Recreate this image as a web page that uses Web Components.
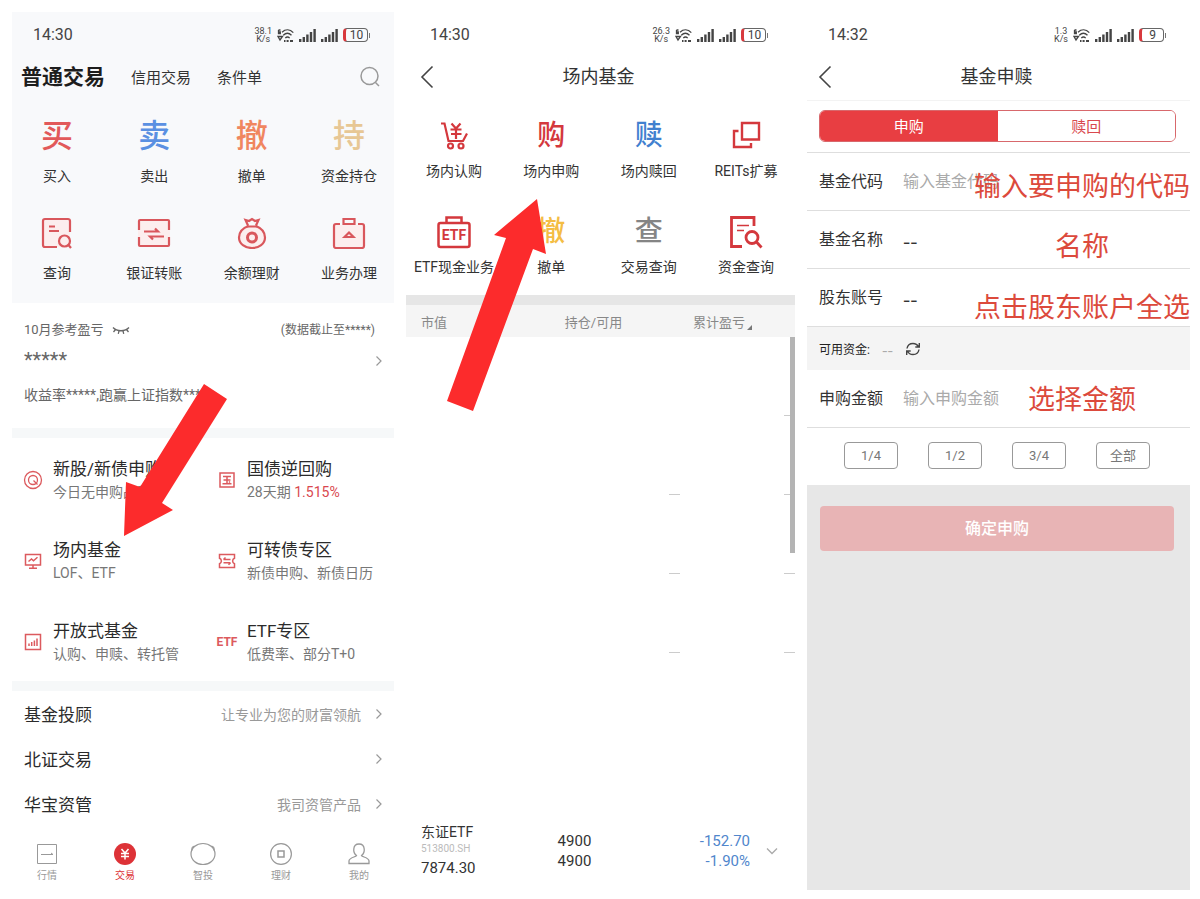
<!DOCTYPE html>
<html lang="zh-CN">
<head>
<meta charset="utf-8">
<meta name="viewport" content="width=device-width, initial-scale=1">
<title>场内基金申购</title>
<style>
  body { margin: 0; background: #fff; color: #333; font-family: Roboto, "Noto Sans CJK SC", sans-serif; }
</style>
</head>
<body>
<app-board>
  <trade-home></trade-home>
  <fund-market></fund-market>
  <fund-order></fund-order>
</app-board>

<script>
const BASE = `
  * { box-sizing: border-box; }
  a { color: inherit; text-decoration: none; }
  button, input { font: inherit; color: inherit; margin: 0; }
  svg { display: block; fill: none; stroke: currentColor; }
`;

class Base extends HTMLElement {
  connectedCallback() {
    if (this.shadowRoot) return;
    const t = document.createElement('template');
    t.innerHTML = `<style>${BASE}${this.css()}</style>${this.html()}`;
    this.attachShadow({ mode: 'open' }).append(t.content.cloneNode(true));
  }
  at(name) { return this.getAttribute(name) || ''; }
  css() { return ''; }
  html() { return '<slot></slot>'; }
}

const CHEVRON = '<svg width="8" height="12" viewBox="0 0 8 12" style="stroke:#999" stroke-width="1.2" aria-hidden="true"><path d="M1.5 1.5 6 6 1.5 10.5"/></svg>';

/* Three screens side by side */
customElements.define('app-board', class extends Base {
  css() { return `
    :host { display: grid; grid-template-columns: 382fr 389fr 383fr; gap: 12px;
      min-height: 100vh; box-sizing: border-box; padding: 12px 10px 10px 12px; }
    ::slotted(*) { min-width: 0; }`; }
});

customElements.define('status-bar', class extends Base {
  css() { return `
    :host { display: flex; align-items: center; height: 46px; padding: 0 24px 0 21px; gap: 5px; color: #444; }
    time { flex: 1; font-size: 16px; line-height: 20px; }
    .speed { font-size: 9px; line-height: 8px; text-align: center; }
    .bars { stroke: none; fill: #444; }
    .battery { display: flex; align-items: center; gap: 1px; }
    .battery span { width: 25px; height: 14px; line-height: 12px; border: 1px solid #666; border-left: 3px solid #d8393d;
      border-radius: 4px; font-size: 12px; text-align: center; }
    .battery i { width: 1px; height: 5px; background: #777; }`; }
  html() {
    const bars = `<svg class="bars" width="17" height="13" viewBox="0 0 17 13" aria-hidden="true"><path d="M0 10h2.400v3H0zM3.600 8H6v5H3.600zM7.200 5.500h2.400V13H7.200zM10.800 3h2.400v10h-2.400zM14.400 0h2.400v13h-2.400z"/></svg>`;
    return `
    <time>${this.at('time')}</time>
    <span class="speed">${this.at('speed')}<br>K/s</span>
    <svg width="17" height="13" viewBox="0 0 17 13" stroke-width="1.300" aria-hidden="true">
      <path d="M5 3.200c3.500-3.200 8-3.100 11.300.4M6.300 6.200c2.500-2.400 5.800-2.300 8.200.1M8.300 9c1.400-1.300 3-1.300 4.400.1M1.500 1v3.500h1.800V3H1.500M1.500 1h2M1 7.500h4.500L3 11z"/>
      <path stroke-width="1.800" d="M7 12h1.500M9.600 12h2M13 12h3"/></svg>
    ${bars}${bars}
    <span class="battery"><span>${this.at('battery')}</span><i></i></span>`; }
});

/* Icon over a caption */
customElements.define('icon-tile', class extends Base {
  css() { return `
    :host { display: block; flex: none; width: var(--tile-width, 64px); }
    a { display: flex; flex-direction: column; align-items: center; gap: var(--tile-gap, 14px); }
    .icon { display: flex; align-items: center; justify-content: center; width: 34px; height: 32px;
      font-size: var(--glyph-size, 32px); line-height: 32px; font-weight: 500; color: var(--tile-color, #d9575c); }
    .label { font-size: 14px; line-height: 20px; white-space: nowrap; color: #333; }`; }
  html() { return `<a href="#"><span class="icon"><slot></slot></span><span class="label">${this.at('label')}</span></a>`; }
});

customElements.define('tile-row', class extends Base {
  css() { return `:host { display: flex; justify-content: space-between; }`; }
});

/* Icon with a title and a note beside it */
customElements.define('menu-card', class extends Base {
  css() { return `
    :host { display: block; min-width: 0; }
    a { display: flex; align-items: center; gap: 10px; }
    .icon { flex: none; display: flex; justify-content: center; width: 20px; color: #dc5a5e; font-size: 12px; font-weight: 700; }
    .text { min-width: 0; white-space: nowrap; }
    .title { display: block; font-size: 17px; line-height: 24px; color: #2b2b2b; }
    .note { display: block; font-size: 14px; line-height: 22px; color: #777; }`; }
  html() { return `<a href="#"><span class="icon"><slot></slot></span>
    <span class="text"><span class="title">${this.at('heading')}</span><span class="note"><slot name="note"></slot></span></span></a>`; }
});

customElements.define('link-row', class extends Base {
  css() { return `
    :host { display: block; }
    a { display: flex; align-items: center; height: 45px; padding: 0 11px 0 12px; gap: 14px; }
    .title { flex: 1; font-size: 17px; color: #2b2b2b; }
    .note { font-size: 14px; color: #999; }`; }
  html() { return `<a href="#"><span class="title">${this.at('heading')}</span><span class="note">${this.at('note')}</span>${CHEVRON}</a>`; }
});

customElements.define('tab-item', class extends Base {
  css() { return `
    :host { display: block; width: 44px; color: #999; }
    :host([active]) { color: #dd3237; }
    a { display: flex; flex-direction: column; align-items: center; gap: 2px; font-size: 10px; line-height: 16px; }`; }
  html() { return `<a href="#"><slot></slot><span>${this.at('label')}</span></a>`; }
});

customElements.define('point-arrow', class extends Base {
  css() { return `
    :host { display: block; position: absolute; pointer-events: none; }
    svg { stroke: none; fill: #fc2b2c; }`; }
  html() {
    const w = this.at('w'), h = this.at('h');
    return `<svg width="${w}" height="${h}" viewBox="0 0 ${w} ${h}" aria-hidden="true"><polygon points="${this.at('points')}"/></svg>`; }
});

/* Screen 1: trading home */
customElements.define('trade-home', class extends Base {
  css() { return `
    :host { display: block; position: relative; }
    .top { background: #f8f9fb; padding-bottom: 20px; }
    nav.tabs { display: flex; align-items: center; height: 38px; padding: 0 13px 0 9px; gap: 26px; }
    .tabs a { font-size: 15px; line-height: 24px; padding-top: 2px; }
    .tabs a[aria-current] { font-size: 21px; font-weight: 700; color: #1d1d1d; padding-top: 0; }
    .tabs button { margin-left: auto; padding: 0; border: 0; background: none; color: #999; }
    tile-row { padding: 0 13px; margin-top: 24px; }
    tile-row + tile-row { margin-top: 31px; }
    .profit { display: grid; grid-template-columns: 1fr auto; align-items: center; padding: 17px 11px 23px 12px; color: #666; font-size: 13px; line-height: 20px; }
    .month { display: flex; align-items: center; gap: 8px; }
    .asof { font-size: 12px; padding-right: 8px; }
    .sum { font-size: 20px; line-height: 24px; padding-top: 8px; height: 32px; }
    .more { justify-self: end; padding-top: 10px; }
    .rate { padding-top: 13px; grid-column: 1 / -1; font-size: 14px; }
    .band { height: 10px; background: #f6f8f9; }
    .cards { display: grid; grid-template-columns: 194fr 177fr; row-gap: 35px; padding: 19px 0 16px 11px; }
    .red { color: #d9484e; }
    .bar { display: flex; justify-content: space-between; padding: 16px 13px 3px; }
    .mark { left: 112px; top: 372px; }`; }
  html() { return `
  <section class="top">
    <status-bar time="14:30" speed="38.1" battery="10"></status-bar>
    <nav class="tabs"><a href="#" aria-current="page">普通交易</a><a href="#">信用交易</a><a href="#">条件单</a>
      <button aria-label="搜索"><svg width="22" height="22" viewBox="0 0 22 22" stroke-width="1.500"><circle cx="10.500" cy="10" r="8.500"/><path d="m16.500 16.500 3.500 3.500"/></svg></button></nav>
    <tile-row>
      <icon-tile label="买入" style="--tile-color:#e2595a">买</icon-tile>
      <icon-tile label="卖出" style="--tile-color:#5a90e2">卖</icon-tile>
      <icon-tile label="撤单" style="--tile-color:#f0865f">撤</icon-tile>
      <icon-tile label="资金持仓" style="--tile-color:#e7c795">持</icon-tile>
    </tile-row>
    <tile-row>
      <icon-tile label="查询"><svg width="32" height="32" viewBox="0 0 32 32" stroke-width="2.200"><path fill="#fceeee" stroke="none" d="M3 2h26v28H3z"/><path d="M29 15V4a2 2 0 0 0-2-2H4a2 2 0 0 0-2 2v24a2 2 0 0 0 2 2h12M8 9.500h6M8 14h10"/><circle cx="23.500" cy="24" r="5.500"/><path d="m27.500 28 2.500 3"/></svg></icon-tile>
      <icon-tile label="银证转账"><svg width="34" height="32" viewBox="0 0 34 32" stroke-width="2.200"><path fill="#fceeee" stroke="none" d="M1 3h32v26H1z"/><path d="M2 13V4a1 1 0 0 1 1-1h28a1 1 0 0 1 1 1v9M2 20v8a1 1 0 0 0 1 1h28a1 1 0 0 0 1-1v-8M7 14.500h14l-3-3M27 19.500H13l3 3"/></svg></icon-tile>
      <icon-tile label="余额理财"><svg width="32" height="32" viewBox="0 0 32 32" stroke-width="2.200"><path fill="#fceeee" d="M12.500 9C7 11 3 15 3 20.500 3 27 9 31 16 31s13-4 13-10.500C29 15 25 11 20 9"/><path d="M11 9.500h10M12 8.500 9.500 3 13 4l3-2 3 2 3.500-1-2.500 5.500"/><circle cx="16" cy="20.500" r="4.500" stroke-width="3"/></svg></icon-tile>
      <icon-tile label="业务办理"><svg width="34" height="32" viewBox="0 0 34 32" stroke-width="2.200"><path fill="#fceeee" stroke="none" d="M3 8h28v22H3z"/><path d="M8 7H4a2 2 0 0 0-2 2v20a2 2 0 0 0 2 2h26a2 2 0 0 0 2-2V9a2 2 0 0 0-2-2h-4M11.500 2h11v5h-11z"/><path d="m12.500 20 4.500-4.500 4.500 4.500z"/></svg></icon-tile>
    </tile-row>
  </section>
  <section class="profit">
    <span class="month">10月参考盈亏 <svg width="18" height="9" viewBox="0 0 18 9" stroke-width="1.300" aria-hidden="true"><path d="M1 1.500c4 4.300 12 4.300 16 0M3.500 3.500 1.500 6M7 4.800 6.300 7.800M11 4.800l.7 3M14.500 3.500l2 2.500"/></svg></span>
    <span class="asof">(数据截止至*****)</span>
    <span class="sum">*****</span><a class="more" href="#" aria-label="查看盈亏">${CHEVRON}</a>
    <span class="rate">收益率*****,跑赢上证指数*****</span>
  </section>
  <div class="band"></div>
  <section class="cards">
    <menu-card heading="新股/新债申购"><svg width="20" height="20" viewBox="0 0 20 20" stroke-width="1.300"><circle cx="10" cy="10" r="8.500"/><circle cx="10" cy="10" r="4.500"/><path d="m10.500 10.500 4 4"/></svg><span slot="note">今日无申购品种</span></menu-card>
    <menu-card heading="国债逆回购"><svg width="18" height="18" viewBox="0 0 18 18" stroke-width="1.500"><path d="M2 2h14v14H2zM5 5.500h8M5.500 9h7M4.500 12.800h9M9 5.500v7.300M11 10.500l1 1"/></svg><span slot="note">28天期 <span class="red">1.515%</span></span></menu-card>
    <menu-card heading="场内基金"><svg width="18" height="18" viewBox="0 0 18 18" stroke-width="1.500"><path d="M1.500 2.500h15v10.500h-15zM9 13v3M5 16.200h8M4.500 9.500 7.500 7l2 1.800 4-3.500"/></svg><span slot="note">LOF、ETF</span></menu-card>
    <menu-card heading="可转债专区"><svg width="18" height="18" viewBox="0 0 18 18" stroke-width="1.500"><path d="M1.500 2.500h15v3.700c-2.500 1-2.500 4.600 0 5.600v3.700h-15v-3.700c2.500-1 2.500-4.600 0-5.600zM5.500 7.500h7M5.500 10.800h7M7.500 5.500l-2 2M10.500 12.800l2-2"/></svg><span slot="note">新债申购、新债日历</span></menu-card>
    <menu-card heading="开放式基金"><svg width="18" height="18" viewBox="0 0 18 18" stroke-width="1.500"><path d="M1.500 1.500h15v15h-15zM5 13v-2.500M7.700 13V9M10.400 13V7.500M13 13V5.500"/></svg><span slot="note">认购、申赎、转托管</span></menu-card>
    <menu-card heading="ETF专区">ETF<span slot="note">低费率、部分T+0</span></menu-card>
  </section>
  <div class="band"></div>
  <link-row heading="基金投顾" note="让专业为您的财富领航"></link-row>
  <link-row heading="北证交易"></link-row>
  <link-row heading="华宝资管" note="我司资管产品"></link-row>
  <nav class="bar">
    <tab-item label="行情"><svg width="24" height="24" viewBox="0 0 24 24"><path d="M2.500 2.500h19v19h-19zM6 12.500h12l-2-1.500"/></svg></tab-item>
    <tab-item label="交易" active><svg width="24" height="24" viewBox="0 0 24 24"><circle cx="12" cy="12" r="11" fill="currentColor" stroke="none"/><path stroke="#fff" stroke-width="1.500" d="m8.500 7 3.500 4 3.500-4M8 11.500h8M8 14.500h8M12 11v6.500"/></svg></tab-item>
    <tab-item label="智投"><svg width="26" height="24" viewBox="0 0 26 24" stroke-width="1.200"><ellipse cx="13" cy="12" rx="12" ry="10.500"/><path d="M2 8.500c-.5-2.500.5-4 2.500-4.500M24 8.500c.5-2.500-.5-4-2.500-4.500"/></svg></tab-item>
    <tab-item label="理财"><svg width="24" height="24" viewBox="0 0 24 24" stroke-width="1.200"><circle cx="12" cy="12" r="10.400"/><path d="M9 9h6v6H9z" stroke-width="1.500"/></svg></tab-item>
    <tab-item label="我的"><svg width="24" height="24" viewBox="0 0 24 24" stroke-width="1.300"><path d="M9.500 13.500C7.500 12 6.500 9.500 6.800 7 7 4 9 2 12 2s5 2 5.200 5c.3 2.500-.7 5-2.700 6.500.5 1.500 7.500 2 7.500 5.500v2.500H2V19c0-3.500 7-4 7.500-5.500z"/></svg></tab-item>
  </nav>
  <point-arrow class="mark" w="104" h="153" points="80,0 103,15 38,119 49,126 0,152 2,98 16,103"></point-arrow>`; }
});

/* Title with a back button */
customElements.define('title-bar', class extends Base {
  css() { return `
    :host { display: grid; grid-template-columns: 44px 1fr 48px; align-items: center; height: 38px; }
    button { justify-self: start; padding: 0 0 0 14px; border: 0; background: none; color: #444; }
    :host([inset]) button { padding-left: 11px; }
    h1 { margin: 0; text-align: center; font-size: 18px; line-height: 24px; font-weight: 400; }`; }
  html() { return `<button aria-label="返回"><svg width="14" height="24" viewBox="0 0 14 24" stroke-width="1.600"><path d="M12.500 1.500 2 12l10.500 10.500"/></svg></button><h1><slot></slot></h1>`; }
});

/* Screen 2: listed funds */
customElements.define('fund-market', class extends Base {
  css() { return `
    :host { display: block; position: relative; }
    status-bar { padding: 0 27px 0 24px; }
    .tiles { padding: 24px 9px 18px 8px; --tile-width: 80px; --tile-gap: 9px; --glyph-size: 28px; --tile-color: #d4383d; }
    tile-row + tile-row { margin-top: 35px; }
    .band { height: 10px; background: #e6e6e6; }
    table { width: 100%; border-collapse: collapse; table-layout: fixed; font-size: 15px; line-height: 20px; }
    th { height: 32px; padding: 3px 0 0; background: #f5f5f5; color: #888; font-size: 13px; font-weight: 400; }
    th, td { text-align: right; }
    th:first-child, td:first-child { text-align: left; padding-left: 15px; width: 30%; }
    td:nth-child(2) { padding-right: 45px; }
    th:nth-child(2) { text-align: center; padding-left: 28px; }
    th:nth-child(3) { padding-right: 5px; }
    th:last-child, td:last-child { width: 45px; }
    td { height: 79px; padding: 0; }
    .rest td { vertical-align: bottom; }
    .rest i { display: block; width: 11px; height: 1px; margin-left: auto; background: #ccc; }
    .rest td:nth-child(3) i { margin-left: 33px; }
    .name { display: block; font-size: 14px; line-height: 18px; }
    .code { display: block; font-size: 10px; line-height: 16px; color: #bbb; }
    .value { display: block; line-height: 22px; }
    .loss { color: #5086cc; }
    .fold { padding: 0 0 0 16px; border: 0; background: none; color: #aaa; display: block; }
    .sort { margin-top: 10px; margin-left: -3px; fill: #777; stroke: none; }
    .scroll { position: absolute; right: 0; top: 325px; width: 5px; height: 216px; background: #b4b4b4; }
    .mark { left: 41px; top: 187px; }`; }
  html() { return `
  <status-bar time="14:30" speed="26.3" battery="10"></status-bar>
  <title-bar>场内基金</title-bar>
  <div class="tiles">
    <tile-row>
      <icon-tile label="场内认购"><svg width="30" height="30" viewBox="0 0 30 30" stroke-width="2.200"><path d="M2 2.500h3.500l4 17.500h14.500l4-7.500"/><circle cx="11.500" cy="25" r="2.500"/><circle cx="22" cy="25" r="2.500"/><path d="m12.500 2.500 4.500 5 4.500-5M11.500 8.500h11M12 13h10.500M17 8v10"/></svg></icon-tile>
      <icon-tile label="场内申购">购</icon-tile>
      <icon-tile label="场内赎回" style="--tile-color:#4180cf">赎</icon-tile>
      <icon-tile label="REITs扩募"><svg width="30" height="30" viewBox="0 0 30 30" stroke-width="2.400"><path d="M11 2h17v16.500H11zM7.500 10H3v16h17v-4"/></svg></icon-tile>
    </tile-row>
    <tile-row>
      <icon-tile label="ETF现金业务"><svg width="34" height="34" viewBox="0 0 34 34" stroke-width="2.500"><path d="M9.500 8V2.500h15V8"/><rect x="1.500" y="8" width="31" height="24" rx="2"/><text x="17" y="25" fill="currentColor" stroke="none" text-anchor="middle" font-size="14" font-weight="700">ETF</text></svg></icon-tile>
      <icon-tile label="撤单" style="--tile-color:#f4bd44">撤</icon-tile>
      <icon-tile label="交易查询" style="--tile-color:#858585">查</icon-tile>
      <icon-tile label="资金查询"><svg width="34" height="34" viewBox="0 0 34 34" stroke-width="2.800"><path d="M25 11V2.500H2.500v29H13"/><path stroke-width="1.500" d="M8 10.500h12M8 15.500h7"/><circle cx="23" cy="22.500" r="6"/><path d="m27.500 27 5 5.500"/></svg></icon-tile>
    </tile-row>
  </div>
  <div class="band"></div>
  <table>
    <thead><tr><th scope="col">市值</th><th scope="col">持仓/可用</th><th scope="col">累计盈亏</th><th><svg class="sort" width="5" height="5" viewBox="0 0 5 5" aria-hidden="true"><path d="M5 0v5H0z"/></svg></th></tr></thead>
    <tbody>
      <tr class="rest"><td></td><td></td><td></td><td><i></i></td></tr>
      <tr class="rest"><td></td><td></td><td><i></i></td><td><i></i></td></tr>
      <tr class="rest"><td></td><td></td><td><i></i></td><td><i></i></td></tr>
      <tr class="rest"><td></td><td></td><td><i></i></td><td><i></i></td></tr>
      <tr class="rest"><td></td><td></td><td></td><td></td></tr>
      <tr class="rest"><td></td><td></td><td></td><td></td></tr>
      <tr>
        <td><span class="name">东证ETF</span><span class="code">513800.SH</span><span class="value">7874.30</span></td>
        <td>4900<br>4900</td>
        <td class="loss">-152.70<br>-1.90%</td>
        <td><button class="fold" aria-label="展开"><svg width="12" height="8" viewBox="0 0 12 8" stroke-width="1.300"><path d="m1 1.500 5 5 5-5"/></svg></button></td>
      </tr>
    </tbody>
  </table>
  <div class="scroll"></div>
  <point-arrow class="mark" w="99" h="212" points="90,0 99,55 86,50 26,212 0,202 59,39 47,36"></point-arrow>`; }
});

/* One labelled line of the order form; without a placeholder it shows a fixed value */
customElements.define('form-line', class extends Base {
  css() { return `
    :host { display: flex; align-items: center; position: relative; height: 58px; padding-left: 12px; border-bottom: 1px solid #dedede; box-sizing: border-box; font-size: 16px; }
    label { flex: none; width: 84px; line-height: 24px; }
    input { flex: 1; min-width: 0; padding: 0; border: 0; outline: 0; background: none; }
    output { flex: 1; font-family: "Noto Sans CJK SC", sans-serif; font-size: 21px; line-height: 24px; }
    input::placeholder { color: #aaa; opacity: 1; }
    .tip { position: absolute; right: var(--tip-right, 0); top: var(--tip-top, 14px); font-size: 27px; line-height: 40px; color: #dc4a3c; pointer-events: none; white-space: nowrap; }`; }
  html() {
    const ph = this.at('placeholder');
    return `<label for="f">${this.at('label')}</label>${ph ? `<input id="f" placeholder="${ph}">` : '<output id="f">--</output>'}<span class="tip">${this.at('tip')}</span>`; }
});

/* Screen 3: fund order form */
customElements.define('fund-order', class extends Base {
  css() { return `
    :host { display: flex; flex-direction: column; }
    .switch { display: grid; grid-template-columns: 1fr 1fr; margin: 0 14px 10px 12px; border: 1px solid #d8686c; border-radius: 6px; overflow: hidden; }
    .switch button { height: 30px; padding: 0 0 2px; border: 0; background: #fff; color: #d9484e; font-size: 15px; }
    .switch button[aria-pressed=true] { background: #e83e42; color: #fff; }
    .head { border-bottom: 1px solid #dedede; }
    title-bar { border-bottom: 1px solid #f3f3f3; height: 43px; padding-bottom: 4px; margin-bottom: 9px; }
    .cash { display: flex; align-items: center; height: 43px; padding-left: 12px; background: #f4f4f4; font-size: 12px; color: #222; }
    .cash output { margin-left: 12px; color: #aaa; font-family: "Noto Sans CJK SC", sans-serif; font-size: 16px; line-height: 20px; }
    .cash button { margin-left: 12px; padding: 0; border: 0; background: none; color: #444; }
    .parts { display: flex; justify-content: space-between; padding: 14px 40px 16px 37px; }
    .parts button { width: 54px; height: 27px; padding: 0; border: 1px solid #999; border-radius: 4px; background: #fff; color: #777; font-size: 13px; line-height: 20px; }
    .foot { flex: 1; background: #e7e7e7; padding: 21px 16px 0 13px; }
    .foot button { width: 100%; height: 45px; padding: 0 0 4px; border: 0; border-radius: 4px; background: #e8b4b5; color: #fff; font-size: 16px; font-weight: 500; }`; }
  html() { return `
  <div class="head">
    <status-bar time="14:32" speed="1.3" battery="9"></status-bar>
    <title-bar inset>基金申赎</title-bar>
    <div class="switch"><button aria-pressed="true">申购</button><button aria-pressed="false">赎回</button></div>
  </div>
  <form-line label="基金代码" placeholder="输入基金代码" tip="输入要申购的代码"></form-line>
  <form-line label="基金名称" tip="名称" style="--tip-right:81px;--tip-top:16px"></form-line>
  <form-line label="股东账号" tip="点击股东账户全选" style="--tip-top:19px"></form-line>
  <div class="cash">可用资金:<output>--</output><button aria-label="刷新"><svg width="16" height="14" viewBox="0 0 16 14" stroke-width="1.400"><path d="M2 6.500C2.500 3.500 5 1.500 8 1.500c2.500 0 4.500 1.300 5.500 3.300M14.300 1v4h-4M14 7.500c-.5 3-3 5-6 5-2.500 0-4.500-1.300-5.500-3.300M1.700 13V9h4"/></svg></button></div>
  <form-line label="申购金额" placeholder="输入申购金额" tip="选择金额" style="--tip-right:54px;--tip-top:10px"></form-line>
  <div class="parts"><button>1/4</button><button>1/2</button><button>3/4</button><button>全部</button></div>
  <div class="foot"><button disabled>确定申购</button></div>`; }
});
</script>
</body>
</html>
